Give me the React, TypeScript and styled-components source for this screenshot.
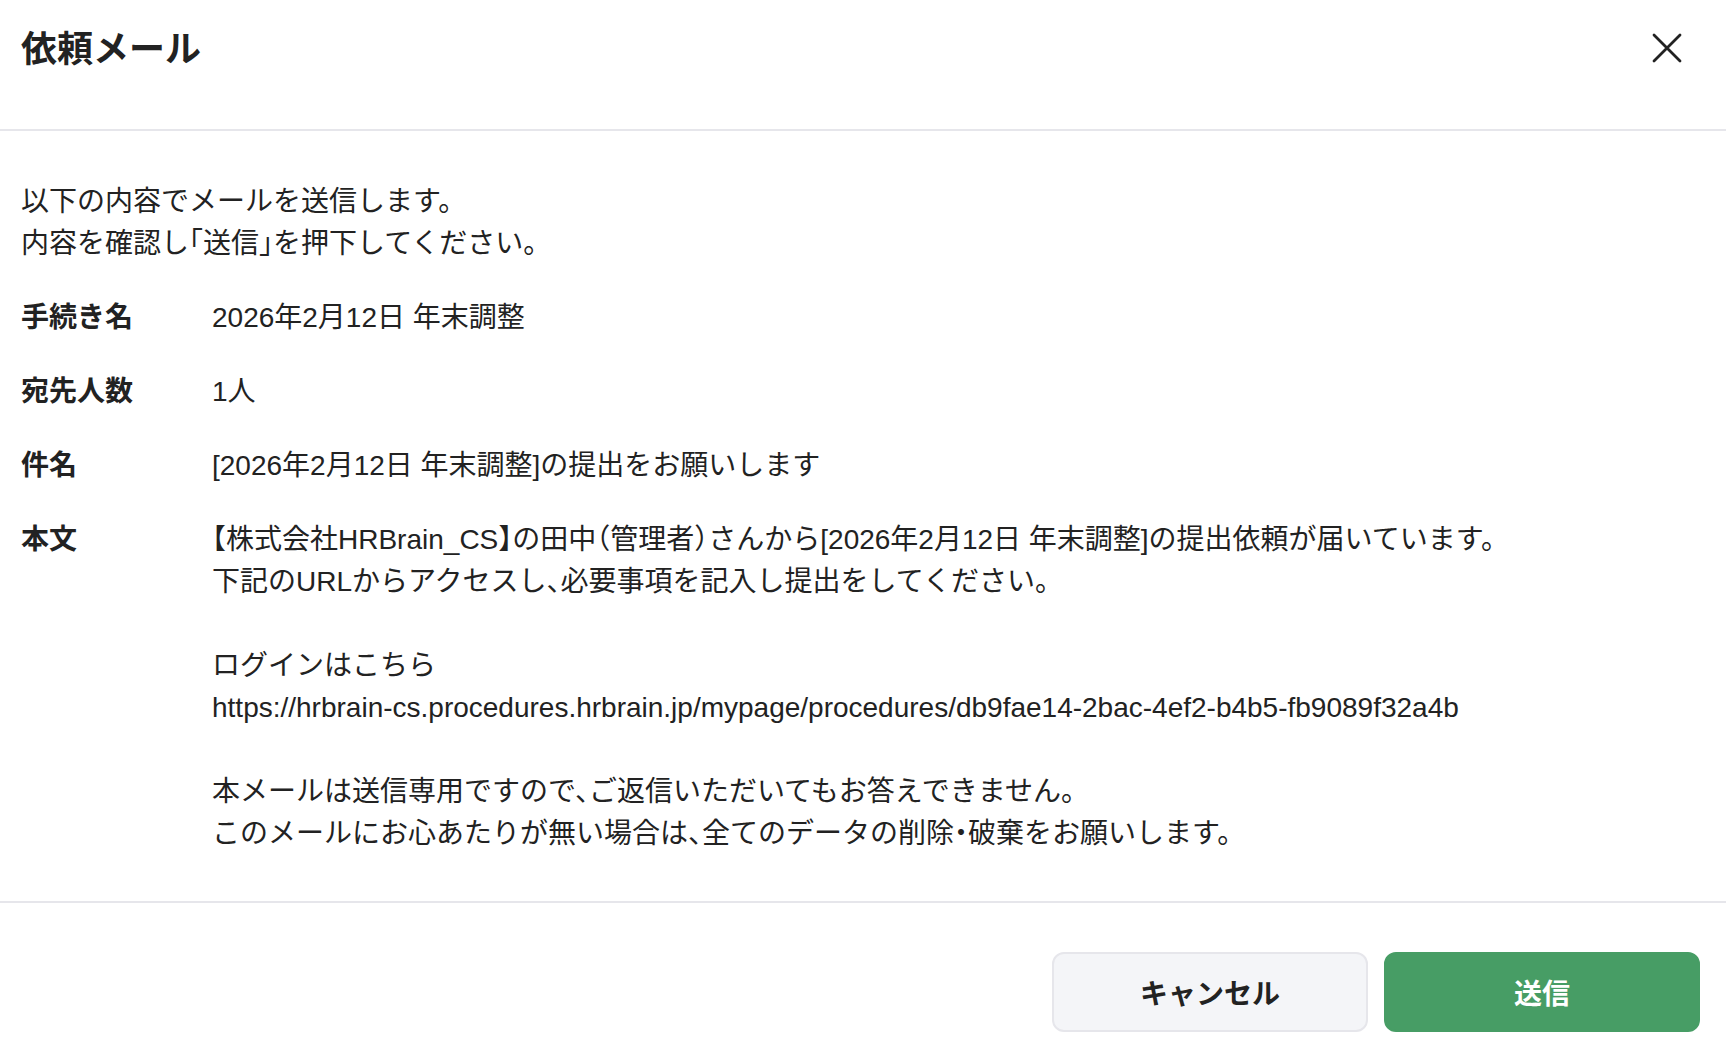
import React from "react";
import styled, { createGlobalStyle } from "styled-components";

const GlobalStyle = createGlobalStyle`
  html, body {
    margin: 0;
    padding: 0;
    background: #ffffff;
  }
  body {
    font-family: "Liberation Sans", "Noto Sans CJK JP", sans-serif;
    color: #222222;
    font-feature-settings: "halt";
  }
  * {
    box-sizing: border-box;
  }
`;

const fields = [
  { label: "手続き名", value: "2026年2月12日 年末調整" },
  { label: "宛先人数", value: "1人" },
  { label: "件名", value: "[2026年2月12日 年末調整]の提出をお願いします" },
];

const mailBody = `【株式会社HRBrain_CS】の田中（管理者）さんから[2026年2月12日 年末調整]の提出依頼が届いています。
下記のURLからアクセスし、必要事項を記入し提出をしてください。

ログインはこちら
https://hrbrain-cs.procedures.hrbrain.jp/mypage/procedures/db9fae14-2bac-4ef2-b4b5-fb9089f32a4b

本メールは送信専用ですので、ご返信いただいてもお答えできません。
このメールにお心あたりが無い場合は、全てのデータの削除・破棄をお願いします。`;

const App = () => {
  return (
    <>
      <GlobalStyle />
      <Dialog>
        <Header>
          <Title>依頼メール</Title>
          <CloseButton aria-label="閉じる">
            <svg width="30" height="30" viewBox="0 0 30 30">
              <path
                d="M2 2 L28 28 M28 2 L2 28"
                stroke="#222"
                strokeWidth="2.8"
                strokeLinecap="round"
                fill="none"
              />
            </svg>
          </CloseButton>
        </Header>
        <Body>
          <Intro>
            以下の内容でメールを送信します。
            <br />
            内容を確認し「送信」を押下してください。
          </Intro>
          <FieldList>
            {fields.map((f) => (
              <React.Fragment key={f.label}>
                <Label>{f.label}</Label>
                <Value>{f.value}</Value>
              </React.Fragment>
            ))}
            <Label>本文</Label>
            <Value $pre>{mailBody}</Value>
          </FieldList>
        </Body>
        <Footer>
          <Button>キャンセル</Button>
          <Button $primary>送信</Button>
        </Footer>
      </Dialog>
    </>
  );
};

const Dialog = styled.div`
  width: 100%;
  background: #ffffff;
`;

const Header = styled.div`
  display: flex;
  justify-content: space-between;
  align-items: flex-start;
  height: 131px;
  padding: 23px 44px 0 21px;
  border-bottom: 2px solid #e6e6eb;
`;

const Title = styled.h1`
  margin: 0;
  font-size: 36px;
  line-height: 54px;
  font-weight: 700;
  color: #222222;
`;

const CloseButton = styled.button`
  display: flex;
  align-items: center;
  justify-content: center;
  height: 50px;
  width: 30px;
  padding: 0;
  border: none;
  background: transparent;
  cursor: pointer;
`;

const Body = styled.div`
  padding: 50px 21px 46px;
  font-size: 28px;
  line-height: 42px;
`;

const Intro = styled.p`
  margin: 0 0 32px;
`;

const FieldList = styled.div`
  display: grid;
  grid-template-columns: 191px 1fr;
  row-gap: 32px;
`;

const Label = styled.div`
  font-weight: 700;
`;

const Value = styled.div<{ $pre?: boolean }>`
  white-space: ${(p) => (p.$pre ? "pre-wrap" : "normal")};
`;

const Footer = styled.div`
  display: flex;
  justify-content: flex-end;
  gap: 16px;
  padding: 49px 26px 49px;
  border-top: 2px solid #e6e6eb;
`;

const Button = styled.button<{ $primary?: boolean }>`
  width: 316px;
  height: 80px;
  border-radius: 12px;
  font-family: inherit;
  font-size: 28px;
  font-weight: 700;
  cursor: pointer;
  color: ${(p) => (p.$primary ? "#ffffff" : "#222222")};
  background: ${(p) => (p.$primary ? "#479d65" : "#f4f5f8")};
  border: 2px solid ${(p) => (p.$primary ? "#479d65" : "#e6e6eb")};
`;

export default App;
